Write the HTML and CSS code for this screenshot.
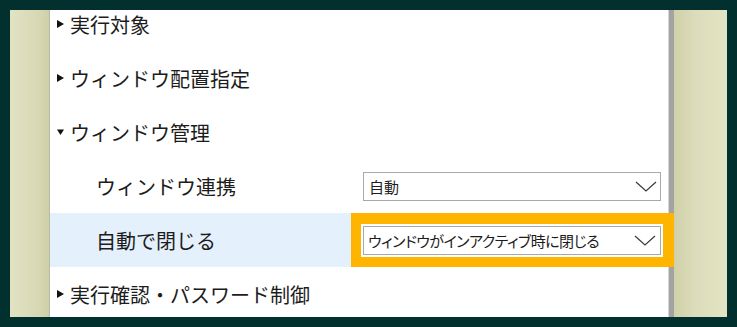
FILE: index.html
```html
<!DOCTYPE html>
<html lang="ja">

<head>
    <meta charset="UTF-8">
    <meta name="viewport" content="width=device-width, initial-scale=1.0">
    <title>設定</title>
    <link rel="stylesheet" href="styles.css">
</head>

<body>
    <div class="frame">
        <div class="window">
            <div class="side side-left"></div>
            <div class="panel">
                <div class="list">
                    <div class="row group">
                        <svg class="tri" width="7" height="8" viewBox="0 0 7 8"><path d="M0 0 L7 4 L0 8 Z" fill="#111"/></svg>
                        <span>実行対象</span>
                    </div>
                    <div class="row group">
                        <svg class="tri" width="7" height="8" viewBox="0 0 7 8"><path d="M0 0 L7 4 L0 8 Z" fill="#111"/></svg>
                        <span>ウィンドウ配置指定</span>
                    </div>
                    <div class="row group">
                        <svg class="tri" width="7" height="8" viewBox="0 0 7 8"><path d="M0 1.5 L7 1.5 L3.5 7 Z" fill="#111"/></svg>
                        <span>ウィンドウ管理</span>
                    </div>
                    <div class="row item">
                        <div class="label">ウィンドウ連携</div>
                        <div class="value">
                            <div class="select">
                                <span>自動</span>
                                <svg class="chev" width="22" height="11" viewBox="0 0 22 11"><path d="M1 1 L11 10 L21 1" fill="none" stroke="#3a3a3a" stroke-width="1.2"/></svg>
                            </div>
                        </div>
                    </div>
                    <div class="row item selected">
                        <div class="label">自動で閉じる</div>
                        <div class="value focused">
                            <div class="select">
                                <span class="narrow">ウィンドウがインアクティブ時に閉じる</span>
                                <svg class="chev" width="22" height="11" viewBox="0 0 22 11"><path d="M1 1 L11 10 L21 1" fill="none" stroke="#3a3a3a" stroke-width="1.2"/></svg>
                            </div>
                        </div>
                    </div>
                    <div class="row group">
                        <svg class="tri" width="7" height="8" viewBox="0 0 7 8"><path d="M0 0 L7 4 L0 8 Z" fill="#111"/></svg>
                        <span>実行確認・パスワード制御</span>
                    </div>
                </div>
            </div>
            <div class="scrollbar"></div>
            <div class="side side-right"></div>
        </div>
    </div>
</body>

</html>
```

FILE: styles.css
```css
* {
    margin: 0;
    padding: 0;
    box-sizing: border-box;
}

body {
    background-color: #02302f;
    font-family: "Noto Sans CJK JP", "Noto Sans", sans-serif;
    color: #1c1c1c;
}

.frame {
    width: 737px;
    height: 327px;
    padding: 10px;
}

.window {
    display: flex;
    height: 307px;
    overflow: hidden;
}

.side {
    height: 100%;
}

.side-left {
    width: 39px;
    background: linear-gradient(to right, #e2e3c3, #d8d8b4 70%, #cfcfa7);
}

.side-right {
    width: 53px;
    background: linear-gradient(to right, #d0d0a9, #dcdcbb 40%, #e3e4c4);
}

.panel {
    width: 619px;
    background-color: white;
    border-left: 1px solid #b9b9a6;
}

.list {
    margin-top: -13px;
}

.row {
    height: 54px;
    display: flex;
    align-items: center;
}

.group {
    padding-left: 7px;
    font-size: 20px;
}

.tri {
    margin-right: 6px;
}

.item {
    font-size: 20px;
}

.item .label {
    width: 301px;
    padding-left: 46px;
}

.selected {
    background-color: #e4f0fb;
}

.value {
    width: 317px;
    height: 100%;
    display: flex;
    align-items: center;
    padding-left: 12px;
}

.value.focused {
    position: relative;
    z-index: 1;
    background-color: #ffb400;
    width: 323px;
    margin-right: -6px;
    padding-left: 10px;
}

.select {
    width: 298px;
    height: 29px;
    border: 1px solid #a8a8a8;
    background-color: white;
    display: flex;
    align-items: center;
    justify-content: space-between;
    padding: 0 3px 0 5px;
    font-size: 15px;
}

.focused .select {
    width: 302px;
    height: 33px;
    border: 2px solid white;
    box-shadow: inset 0 0 0 1px #a8a8a8;
    padding: 0 5px 0 5px;
}

.narrow {
    font-feature-settings: "palt";
    letter-spacing: -0.5px;
}

.scrollbar {
    width: 6px;
    background-color: #a3a3a3;
    border-left: 1px solid #d6d6d6;
}
```
